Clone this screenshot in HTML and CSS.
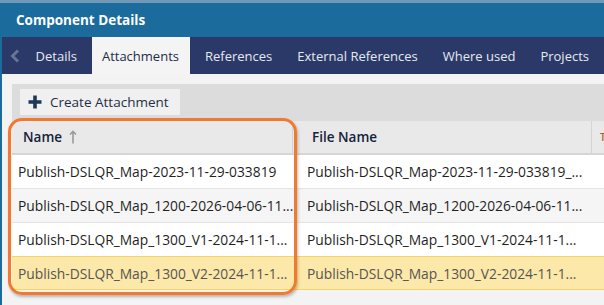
FILE: index.html
```html
<!DOCTYPE html>
<html>
<head>
<meta charset="utf-8">
<link rel="stylesheet" href="styles.css">
</head>
<body>
<div class="top-strip"></div>
<div class="title-bar">Component Details</div>
<div class="frame">
  <div class="tabs">
    <span class="chev"><svg width="10" height="14" viewBox="0 0 10 14"><path d="M8 1.5 L2.5 7 L8 12.5" fill="none" stroke="#6a7394" stroke-width="3"/></svg></span>
    <span class="tab">Details</span>
    <span class="tab active">Attachments</span>
    <span class="tab">References</span>
    <span class="tab">External References</span>
    <span class="tab">Where used</span>
    <span class="tab">Projects</span>
  </div>
  <div class="content">
    <div class="toolbar">
      <button class="btn"><svg width="14" height="14" viewBox="0 0 14 14"><path d="M7 0.5 V13.5 M0.5 7 H13.5" stroke="#1d3957" stroke-width="3.6"/></svg><span>Create Attachment</span></button>
    </div>
    <div class="table">
      <div class="row head">
        <div class="c1">Name <svg class="arrow" width="8" height="14" viewBox="0 0 8 14"><path d="M4 1.5 V13.5 M1 4.5 L4 1.5 L7 4.5" fill="none" stroke="#9a9a9a" stroke-width="1.6"/></svg></div>
        <div class="c2">File Name</div>
        <div class="c3">T</div>
      </div>
      <div class="row">
        <div class="c1">Publish-DSLQR_Map-2023-11-29-033819</div>
        <div class="c2">Publish-DSLQR_Map-2023-11-29-033819_...</div>
        <div class="c3"></div>
      </div>
      <div class="row alt">
        <div class="c1">Publish-DSLQR_Map_1200-2026-04-06-11...</div>
        <div class="c2">Publish-DSLQR_Map_1200-2026-04-06-11...</div>
        <div class="c3"></div>
      </div>
      <div class="row">
        <div class="c1">Publish-DSLQR_Map_1300_V1-2024-11-1...</div>
        <div class="c2">Publish-DSLQR_Map_1300_V1-2024-11-1...</div>
        <div class="c3"></div>
      </div>
      <div class="row sel">
        <div class="c1">Publish-DSLQR_Map_1300_V2-2024-11-1...</div>
        <div class="c2">Publish-DSLQR_Map_1300_V2-2024-11-1...</div>
        <div class="c3"></div>
      </div>
      <div class="highlight"></div>
    </div>
  </div>
</div>
</body>
</html>
```

FILE: styles.css
```css
* { box-sizing: border-box; }
html, body { margin: 0; padding: 0; }
body {
  width: 604px;
  height: 305px;
  overflow: hidden;
  background: #ffffff;
  font-family: "Open Sans", "Noto Sans", sans-serif;
  font-size: 13px;
}
.top-strip { height: 3px; background: #7199b6; }
.title-bar {
  height: 34px;
  background: #1b6b9c;
  color: #ffffff;
  font-weight: 700;
  font-size: 13.5px;
  line-height: 34px;
  padding-left: 16px;
}
.frame {
  border-left: 2px solid #1b6b9c;
  height: 268px;
  background: #f3f3f3;
}
.tabs {
  height: 37px;
  background: #2b3968;
  display: flex;
  align-items: stretch;
  white-space: nowrap;
}
.chev {
  width: 24px;
  display: flex;
  align-items: center;
  padding-left: 8px;
}
.tab {
  color: #e6e9f1;
  padding: 0 10px;
  margin-right: 5px;
  display: flex;
  align-items: center;
  flex: none;
}
.tab.active {
  background: #f4f4f4;
  color: #1d2c48;
  padding-right: 11px;
}
.content {
  padding: 10px 0 0 10px;
}
.toolbar {
  background: #dcdcdc;
  height: 37px;
  padding: 5px 8px;
}
.btn {
  height: 26px;
  width: 160px;
  border: none;
  background: #f0f0f0;
  display: flex;
  align-items: center;
  gap: 8px;
  padding: 0 0 0 8px;
  font-family: inherit;
  font-size: 13.5px;
  color: #1f2f45;
}
.table { position: relative; background: #ffffff; }
.row {
  display: flex;
  height: 34px;
  border-bottom: 1px solid #e4e4e4;
  color: #1f1f1f;
  white-space: nowrap;
  font-size: 13.8px;
}
.row > div {
  display: flex;
  align-items: center;
}
.c1 { width: 281px; padding-left: 6px; flex: none; }
.c2 { width: 299px; padding-left: 14px; flex: none; }
.c3 { flex: 1; padding-left: 8px; }
.row.head {
  background: #e9e9e9;
  height: 34px;
  border-bottom: 2px solid #d6d6d6;
  color: #16213a;
  font-weight: 600;
  font-size: 13.5px;
}
.row.head > div { border-right: 1px solid #d4d4d4; }
.row.head .c1 { padding-left: 11px; }
.row.head .c2 { padding-left: 19px; }
.row.head .c3 { border-right: none; color: #b25a2a; font-size: 10px; }
.arrow { margin-left: 7px; }
.row.alt { background: #f5f5f5; }
.row.sel {
  background: #fce8a8;
  border-top: 1px solid #f2d565;
  border-bottom: 1px solid #f2d565;
  color: #555555;
  margin-top: -1px;
}
.highlight {
  position: absolute;
  left: -4px;
  top: -3px;
  width: 289px;
  height: 177px;
  border: 3.5px solid #f27a30;
  border-radius: 14px;
  box-shadow: 1px 2px 3px rgba(0,0,0,0.25);
  pointer-events: none;
}
```
